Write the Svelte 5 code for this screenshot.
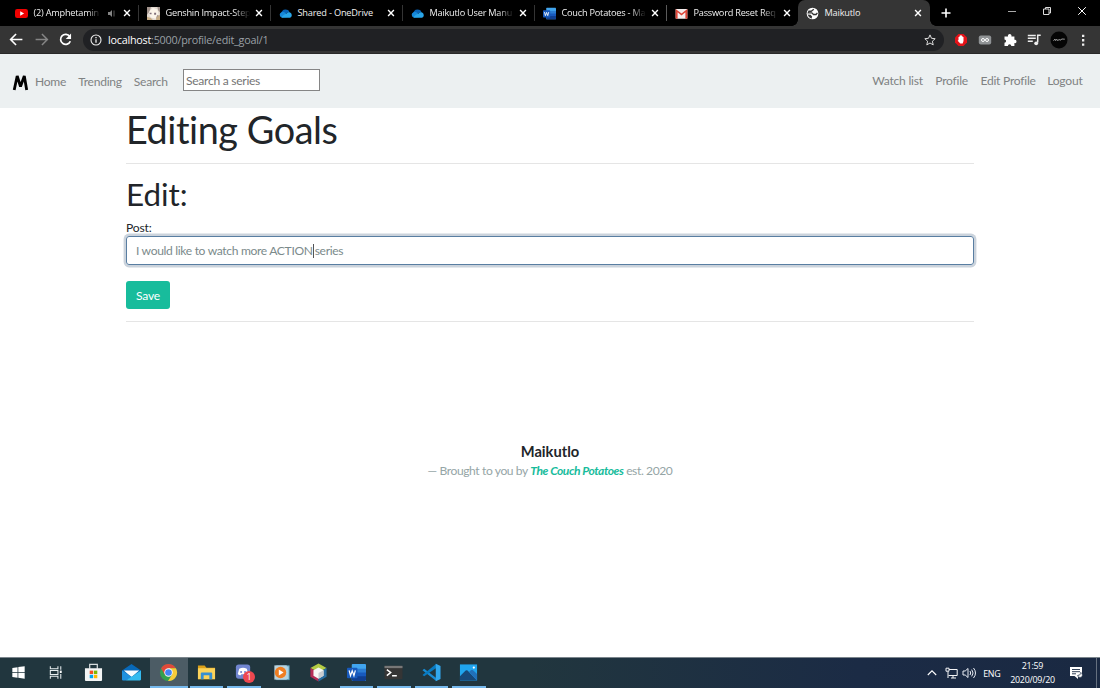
<script>
  const tabs = [
    { icon: 'youtube', title: '(2) Amphetamin', sound: true, fade: true, line: '#343434' },
    { icon: 'anime', title: 'Genshin Impact-Step', fade: true, line: '#343434' },
    { icon: 'cloud', title: 'Shared - OneDrive', line: '#343434' },
    { icon: 'cloud', title: 'Maikutlo User Manu', fade: true, line: '#343434' },
    { icon: 'word', title: 'Couch Potatoes - Ma', fade: true, line: '#5a5a5a' },
    { icon: 'gmail', title: 'Password Reset Req', fade: true, line: 'transparent' }
  ];
  const apps = [
    { icon: 'windows' },
    { icon: 'taskview' },
    { icon: 'store' },
    { icon: 'mail' },
    { icon: 'chrome', open: true, active: true },
    { icon: 'files', open: true },
    { icon: 'discord', open: true },
    { icon: 'media' },
    { icon: 'cube' },
    { icon: 'word', open: true },
    { icon: 'terminal', open: true },
    { icon: 'vscode', open: true },
    { icon: 'photos', open: true }
  ];
</script>

{#snippet close()}
  <svg class="x" viewBox="0 0 8 8"><path d="M1.1 1.1 6.9 6.9M6.9 1.1 1.1 6.9" stroke="#fff" stroke-width="1.4" /></svg>
{/snippet}

{#snippet glyph(name)}
  <svg class="glyph" viewBox="0 0 20 20">
    {#if name === 'youtube'}
      <rect x="0" y="3" width="20" height="14" rx="3.5" fill="#f00000" />
      <path d="m8 6.5 6 3.5-6 3.5z" fill="#fff" />
    {:else if name === 'anime'}
      <rect width="20" height="20" fill="#e2d8cf" />
      <path d="M0 0h6L4 7 0 12zM16 0h4v8l-3-3z" fill="#a3948d" />
      <path d="M4 6 9 1l7 3 2 8-5 6-7-2-3-5z" fill="#fbf4ea" />
      <path d="M4 9h3v2H4zM11 9h3v3h-3z" fill="#7f6d78" />
      <path d="M16 12l3 2-2 4-3-2z" fill="#a8978f" />
      <path d="M0 15l6 2 3 3H0zM14 17l6-5v8h-6z" fill="#c6ab84" />
    {:else if name === 'cloud'}
      <path d="M3 12C3 7 6 4 10 4c3 0 5 1 6 4z" fill="#0864b8" />
      <path d="M4 16a4.2 4.2 0 0 1 0-8c3-1 5 0 7 2l7 5z" fill="#1688da" />
      <path d="M4 16.5c1-4 5-5 7-6 2-2 4-3 6-2 3 1 4 7 0 8z" fill="#29a5e9" />
    {:else if name === 'word'}
      <rect x="5" y="1" width="15" height="18" rx="1" fill="#41a5ee" />
      <path d="M5 6h15v5H5z" fill="#2b7cd3" /><path d="M5 10h15v5H5z" fill="#185abd" /><path d="M5 14h15v4l-1 1H6l-1-1z" fill="#103f91" />
      <rect y="5" width="11" height="11" rx="1" fill="#185abd" />
      <path d="m2.2 7.8 1.5 5.5 1.8-5 1.8 5 1.5-5.5" fill="none" stroke="#fff" stroke-width="1.3" />
    {:else if name === 'gmail'}
      <rect x="1" y="3" width="18" height="15" rx="1" fill="#f4eeee" />
      <path d="M1 3 10 10 19 3v15h-3V8l-6 5-6-5v10H1z" fill="#dc4538" />
    {:else if name === 'globe'}
      <circle cx="10" cy="10" r="9" fill="#fff" />
      <path d="M12 3.500 8 6.500H4.500L3.500 9h5.500l2.500 2.500h4L17.500 9" fill="none" stroke="#353535" stroke-width="2" />
      <path d="M2.500 11.500 7 12l2.500 2.500-1 3.500-4-2.500z" fill="#353535" />
    {:else if name === 'windows'}
      <path d="M3.5 5.2 9 4.4v5.1H3.5zM9.8 4.3l6.7-1v6.2H9.8zM3.5 10.3H9v5.2l-5.5-.8zM9.8 10.3h6.7v6.3l-6.7-1z" fill="#fff" />
    {:else if name === 'taskview'}
      <path d="M3.5 3.5V6h8V3.5M3.5 16.5V14h8v2.5M3.5 8h8v4h-8zM14.5 3.5V7M14.5 11.5v5" fill="none" stroke="#e7eef0" stroke-width="1.1" />
      <path d="M13.5 8h2v2.5h-2z" fill="#fff" />
    {:else if name === 'store'}
      <path d="M6 6V1.5h8V6" fill="none" stroke="#d8dedf" stroke-width="1.3" />
      <path d="M1 5.5h18V18q0 1-1 1H2q-1 0-1-1z" fill="#f3f5f5" />
      <path d="M6 8h3.6v3.6H6z" fill="#f25022" /><path d="M10.4 8H14v3.6h-3.6z" fill="#7fba00" /><path d="M6 12.4h3.6V16H6z" fill="#00a4ef" /><path d="M10.4 12.4H14V16h-3.6z" fill="#ffb900" />
    {:else if name === 'mail'}
      <path d="m0 8 10-7 10 7v4H0z" fill="#0869b8" /><path d="M2 8h16l-8 7z" fill="#f7fbff" />
      <path d="m0 8 11 7-7 3.5H1L0 18z" fill="#1e91df" /><path d="m20 8-16 10.5h15l1-1z" fill="#35bbef" />
    {:else if name === 'chrome'}
      <circle cx="10" cy="10" r="9" fill="#32a14f" />
      <path d="M2.2 5.5a9 9 0 0 1 15.6 0H10l-3.9 6.8z" fill="#df493b" />
      <path d="M17.8 5.5A9 9 0 0 1 9.5 19l4.4-6.8L10 5.5z" fill="#f8cb3a" />
      <circle cx="10" cy="10" r="4.4" fill="#fff" /><circle cx="10" cy="10" r="3.5" fill="#4385f4" />
    {:else if name === 'files'}
      <path d="M1 2.5h7L10 5h9v12H1z" fill="#dba018" /><path d="M1 5.5h18V17H1z" fill="#fbd35a" />
      <path d="M4 17v-6q0-1 1-1h10q1 0 1 1v6h-3v-4H7v4z" fill="#358fd4" />
    {:else if name === 'discord'}
      <rect x="2" y="1.5" width="15" height="15" rx="3" fill="#7186d0" />
      <path d="M5.5 6q4-2 8 0l1.5 5.5q-1.500 1.5-3 1.5l-.8-1.2H7.8L7 13q-2 0-3-1.5z" fill="#fff" />
      <circle cx="7.5" cy="9.4" r="1.1" fill="#7186d0" /><circle cx="11.6" cy="9.4" r="1.1" fill="#7186d0" />
    {:else if name === 'media'}
      <rect x="5" y="3" width="13" height="14.5" fill="#a9d4e7" stroke="#5a9bb7" /><rect x="2.5" y="2.5" width="13" height="15" fill="#bcd3dc" />
      <circle cx="9" cy="10" r="6" fill="#ef7e22" /><path d="m7.2 6.800 5 3.200-5 3.200z" fill="#fff" />
    {:else if name === 'cube'}
      <path d="m10 .5 8.5 4.8L10 9.9 1.5 5.3z" fill="#b4cc45" /><path d="m1.5 5.3 8.5 4.6v9.6l-8.5-4.9z" fill="#b52e57" /><path d="M18.5 5.3 10 9.900v9.6l8.5-4.9z" fill="#286c9f" />
      <path d="m10 4.8 5.3 2.8v5.8L10 16.5l-5.3-3.1V7.6z" fill="#f7f8f5" /><path d="m10 10.5 5.3-2.9v5.8L10 16.5z" fill="#c9ccd0" />
    {:else if name === 'terminal'}
      <rect x=".5" y="3" width="19" height="14" rx="1" fill="#353535" /><path d="M.5 3h19v2.4H.5z" fill="#777" />
      <path d="m3 7 4 3-4 3.2M8.5 13.5h5" fill="none" stroke="#fff" stroke-width="1.6" />
    {:else if name === 'vscode'}
      <path d="M.5 7.5 2.3 6 15 15.7V19z" fill="#188bd3" />
      <path d="M.5 12.5 15 .8v4.5L2.3 14z" fill="#087ac0" /><path d="m14.5.8 5 2.3v13.8l-5 2.300z" fill="#32a8ed" />
    {:else if name === 'photos'}
      <rect x="1" y="1.5" width="18" height="17" fill="#20a5ee" /><path d="m1 14 6-6q1.5-1 3 1l9 9.5H1z" fill="#174879" />
      <path d="m10.5 9.5 2-2q1.2-1 2.3 0l4.2 4v7z" fill="#2170b9" /><circle cx="15.6" cy="4.8" r="1.2" fill="#fff" />
    {/if}
  </svg>
{/snippet}

<div class="screen">
  <header class="tabs">
    {#each tabs as tab}
      <div class="tab" class:sounding={tab.sound}>
        <span class="fav">{@render glyph(tab.icon)}</span>
        <span class="title" class:fade={tab.fade}>{tab.title}</span>
        {#if tab.sound}
          <svg class="sound" viewBox="0 0 9 9"><path d="M1 3h2l2-2v7L3 6H1z" fill="#858585" /><path d="M7 1.5v6" stroke="#555" /></svg>
        {/if}
        {@render close()}
        <span class="separator" style:background={tab.line}></span>
      </div>
    {/each}
    <div class="tab active">
      <span class="fav">{@render glyph('globe')}</span>
      <span class="title">Maikutlo</span>
      {@render close()}
    </div>
    <svg class="plus" viewBox="0 0 10 10"><path d="M5 .5v9M.5 5h9" stroke="#fff" stroke-width="1.6" /></svg>
    <div class="controls">
      <svg viewBox="0 0 10 10"><path d="M1 5.5h8" stroke="#aaa" /></svg>
      <svg viewBox="0 0 10 10"><path d="M1.5 3H7v5.5H1.5zM3.5 3V1.500h5V7H7" fill="none" stroke="#ddd" /></svg>
      <svg viewBox="0 0 10 10"><path d="m1.2 1.2 7.6 7.6M8.8 1.2 1.2 8.8" stroke="#fff" /></svg>
    </div>
  </header>

  <div class="toolbar">
    <div class="history">
      <svg viewBox="0 0 14 14"><path d="M12.5 7h-11M6.6 1.9 1.5 7l5.1 5.1" fill="none" stroke="#fff" stroke-width="1.5" /></svg>
      <svg viewBox="0 0 14 14"><path d="M1.5 7h11M7.4 1.9 12.5 7l-5.1 5.1" fill="none" stroke="#858585" stroke-width="1.4" /></svg>
      <svg viewBox="0 0 14 14"><path d="M11 4.2A4.7 4.7 0 1 0 11.5 8.6" fill="none" stroke="#fff" stroke-width="1.6" /><path d="M12.2 1.5v5h-5z" fill="#fff" /></svg>
    </div>
    <div class="address">
      <svg class="info" viewBox="0 0 12 12"><circle cx="6" cy="6" r="5" fill="none" stroke="#eee" stroke-width="1.1" /><path d="M6 5.2v3.6M6 3v1.2" stroke="#eee" stroke-width="1.3" /></svg>
      <span class="url"><b>localhost</b>:5000/profile/edit_goal/1</span>
      <svg class="star" viewBox="0 0 12 12"><path d="m6 .9 1.5 3.4 3.7.4-2.8 2.5.8 3.7L6 9l-3.2 1.9.8-3.7L.8 4.7l3.7-.4z" fill="none" stroke="#ddd" stroke-width="1" /></svg>
    </div>
    <div class="extensions">
      <svg viewBox="0 0 14 14"><path d="M4.5 1h5L13 4.5v5L9.5 13h-5L1 9.5v-5z" fill="#e31319" /><path d="M4.5 7V4h1V2.8h1V2h1v1h1v1h1v4l-.8 2.5H6.3L3.7 7.7l.7-.6 1 1" fill="#fff" /></svg>
      <svg viewBox="0 0 14 14"><rect x=".8" y="2.5" width="12.4" height="9" rx="2" fill="#909395" /><circle cx="5" cy="7" r="1.5" fill="none" stroke="#fff" /><circle cx="9" cy="7" r="1.5" fill="none" stroke="#fff" /></svg>
      <svg viewBox="0 0 14 14"><path d="M1.5 3.5H5a1.8 1.8 0 1 1 3.4 0h3v3.3a1.7 1.7 0 1 1 0 3.3v2.9H8.3a1.7 1.7 0 1 0-3.4 0H1.5V9.7a1.6 1.6 0 1 0 0-3.2z" fill="#fff" /></svg>
      <svg viewBox="0 0 14 14"><path d="M.8 2.4h8M.8 5.3h8M.8 8.2h5M13.7 2.3h-3v7.2" fill="none" stroke="#eee" stroke-width="1.5" /><circle cx="9.2" cy="10.3" r="1.9" fill="#eee" /></svg>
      <svg class="avatar" viewBox="0 0 18 18"><circle cx="9" cy="9" r="8.5" fill="#050505" /><path d="M3.5 9.8 5 8l.5 1.5L7 8.3l.5 1.2 2-1 .4.8L12 8l2.8.2" fill="none" stroke="#aaa" stroke-width=".9" /></svg>
      <svg viewBox="0 0 14 14"><path d="M6 1.7h2.3V4H6zm0 4.4h2.3v2.3H6zm0 4.4h2.3v2.3H6z" fill="#eee" /></svg>
    </div>
  </div>

  <nav>
    <svg class="logo" viewBox="0 0 17 17"><path d="M2.2 16 5.200 2l3.300 10.5L12.300 2 14.700 16" fill="none" stroke="#000" stroke-width="2.8" stroke-linejoin="bevel" /></svg>
    <div class="links">
      <span>Home</span>
      <span>Trending</span>
      <span>Search</span>
    </div>
    <div class="search-box">Search a series</div>
    <div class="account">
      <span>Watch list</span>
      <span>Profile</span>
      <span>Edit Profile</span>
      <span class="logout">Logout</span>
    </div>
  </nav>

  <main>
    <h1>Editing Goals</h1>
    <hr />
    <h2>Edit:</h2>
    <div class="label">Post:</div>
    <div class="field"><span>I would like to watch more ACTION</span><i class="caret"></i><span>series</span></div>
    <button>Save</button>
    <hr class="end" />
    <footer>
      <h3>Maikutlo</h3>
      <p>— Brought to you by <em>The Couch Potatoes</em> est. 2020</p>
    </footer>
  </main>

  <div class="taskbar">
    {#each apps as app}
      <div class="app" class:open={app.open} class:current={app.active}>
        {@render glyph(app.icon)}
        {#if app.icon === 'discord'}<span class="badge">1</span>{/if}
      </div>
    {/each}
    <div class="tray">
      <svg class="chevron" viewBox="0 0 10 10"><path d="m.8 7 4.2-4.2L9.2 7" fill="none" stroke="#fff" stroke-width="1.1" /></svg>
      <svg class="network" viewBox="0 0 13 13"><path d="M4 2.5h8.2v6H3.5M3 4.5V11M6 11h5M8 8.5V11M1 1.2h3v3H1z" fill="none" stroke="#f4f5f7" /></svg>
      <svg class="volume" viewBox="0 0 14 12"><path d="M1 4h2.2L6 1.5v9L3.2 8H1zM8 4q1.4 2 0 4M9.7 2.6q2.7 3.4 0 6.8M11.5 1q4 5 0 10" fill="none" stroke="#e9edf4" /></svg>
      <span class="language">ENG</span>
      <span class="clock"><span>21:59</span><span>2020/09/20</span></span>
      <svg class="notice" viewBox="0 0 14 14"><path d="M1 1h12v8H9v4L5.5 10H1z" fill="#fff" /><path d="M3 3.5h8M3 5.7h8M3 7.8h4" stroke="#1b2b45" stroke-width=".9" /><path d="M8.5 9.5a2.5 2.5 0 1 0 3-3q1 2.5-3 3z" fill="#fff" stroke="#1b2b45" stroke-width=".6" /></svg>
      <span class="peek"></span>
    </div>
  </div>
</div>

<style>
  :global(body) { margin: 0; overflow: hidden; }
  * { box-sizing: border-box; }
  svg { display: block; flex: none; }
  .screen { width: 1100px; height: 688px; display: flex; flex-direction: column; background: #fff; font-family: Lato, sans-serif; font-size: 12.08px; color: #212529; }
  .tabs { display: flex; height: 26px; flex: none; padding-left: 7px; background: #000; color: #f0f0f0; font-family: "Open Sans", sans-serif; font-size: 9.2px; }
  .tab { display: flex; align-items: center; width: 132px; flex: none; padding-left: 8px; }
  .fav { width: 13px; height: 13px; margin-right: 5px; flex: none; }
  .glyph { width: 100%; height: 100%; }
  .title { width: 86px; margin-right: 3.5px; flex: none; white-space: nowrap; letter-spacing: -.23px; line-height: 16px; padding-left: .5px; }
  .fade { mask-image: linear-gradient(90deg, #000 80%, transparent 99%); }
  .tab:not(.sounding) .title:not(.fade) { letter-spacing: -.18px; }
  .sounding .title { width: 68px; }
  .sound { width: 9px; height: 9px; margin: 0 7px 0 2px; }
  .x { width: 8px; height: 8px; }
  .separator { width: 1px; height: 16px; margin-left: auto; }
  .active { position: relative; background: #353535; border-radius: 7px 7px 0 0; margin-left: -1px; }
  .active::before, .active::after { content: ""; position: absolute; bottom: 0; width: 6px; height: 6px; }
  .active::before { left: -6px; background: radial-gradient(circle at 0 0, #000 5.5px, #353535 6px); }
  .active::after { right: -6px; background: radial-gradient(circle at 100% 0, #000 5.5px, #353535 6px); }
  .plus { width: 10px; height: 10px; margin: 8px 0 0 11px; }
  .controls { display: flex; gap: 25px; margin: 6px 13px 0 auto; }
  .controls svg { width: 10px; height: 10px; }
  .toolbar { height: 28px; flex: none; display: flex; align-items: center; background: #353535; padding: 0 6px 0 9px; border-bottom: 1px solid #292929; }
  .history { display: flex; gap: 9.5px; width: 74px; }
  .history svg { width: 15px; height: 15px; }
  .address { height: 22px; width: 861px; flex: none; border-radius: 11px; background: #202124; display: flex; align-items: center; padding: 0 8px 0 7px; color: #9aa0a6; }
  .info { width: 12px; height: 12px; margin-right: 6px; }
  .url { font: 10.8px/18px "Open Sans", sans-serif; letter-spacing: -.24px; }
  .url b { font-weight: 400; color: #fff; }
  .star { width: 12px; height: 12px; margin-left: auto; }
  .extensions { display: flex; align-items: center; gap: 10.4px; margin-left: 10px; }
  .extensions svg { width: 14px; height: 14px; }
  .extensions .avatar { width: 18px; height: 18px; margin: 0 -2px; }
  nav { height: 54px; flex: none; background: #ecf0f1; display: flex; align-items: center; padding: 0 17.5px 0 12px; color: #7f8283; white-space: nowrap; }
  .logo { width: 17px; height: 17px; margin-top: 2px; }
  .links { display: flex; gap: 12px; margin-left: 6px; width: 148px; letter-spacing: -.26px; }
  .search-box { width: 137px; height: 22px; background: #fff; border: 1px solid #858585; color: #757575; line-height: 21px; padding-left: 2px; margin-bottom: 3px; letter-spacing: -.28px; }
  .account { display: flex; gap: 12.5px; margin-left: auto; letter-spacing: -.24px; margin-bottom: 2px; }
  .logout { margin-left: -1px; }
  main { width: 848px; margin: 0 auto; flex: 1; min-height: 0; }
  h1, h2, h3, p { margin: 0; font-weight: 400; }
  h1 { height: 55px; font-size: 37.8px; line-height: 43px; letter-spacing: -.44px; }
  hr { border: 0; border-top: 1px solid #e5e5e5; margin: 0; }
  h2 { font-size: 31.4px; line-height: 38px; margin-top: 11px; }
  .label { height: 18px; margin-top: 6px; line-height: 18px; letter-spacing: -.16px; }
  .field { height: 29px; border: 1px solid #597ea2; border-radius: 3px; box-shadow: 0 0 0 2.4px #cbd3dc; display: flex; align-items: center; padding-left: 9px; color: #7b8a8b; margin-top: -1px; letter-spacing: -.33px; }
  .caret { width: 1px; height: 14px; background: #555; margin-right: 1px; }
  button { display: block; width: 44px; height: 28px; margin-top: 16px; border: 0; border-radius: 3px; padding: 0; background: #18bc9c; color: #fff; font: inherit; letter-spacing: -.15px; }
  .end { margin-top: 12px; }
  footer { margin-top: 119px; text-align: center; }
  h3 { font-size: 14.7px; line-height: 21px; font-weight: 700; }
  p { line-height: 18px; color: #95a5a6; letter-spacing: -.4px; }
  em { color: #18bc9c; font-weight: 700; letter-spacing: -.46px; }
  .taskbar { height: 31px; flex: none; border-top: 1px solid #7b858c; background: linear-gradient(90deg, #21363e 0%, #21363e 48%, #1b2b45 78%, #1a2942); display: flex; color: #fff; font-family: "Open Sans", sans-serif; }
  .app { width: 37.5px; flex: none; display: flex; align-items: center; justify-content: center; position: relative; border-bottom: 2px solid transparent; background-clip: padding-box; }
  .app .glyph { width: 19px; height: 19px; margin-top: 1px; margin-right: .5px; }
  .open { border-image: linear-gradient(90deg, transparent 9%, #76b9ed 9% 91%, transparent 91%) 2; border-width: 0 0 2px; border-style: solid; }
  .current { background: #4c5c65; border-image: none; border-color: #76b9ed; }
  .badge { position: absolute; left: 18px; top: 13px; width: 12px; height: 12px; border-radius: 50%; background: #ef4850; font-size: 9px; line-height: 12px; text-align: center; }
  .tray { display: flex; align-items: center; margin-left: auto; font-size: 8.9px; letter-spacing: -.25px; }
  .chevron { width: 10px; height: 10px; }
  .network { width: 13px; height: 13px; margin-left: 8px; }
  .volume { width: 14px; height: 12px; margin-left: 4px; }
  .language { margin-left: 7px; }
  .clock { display: flex; flex-direction: column; text-align: center; line-height: 13.5px; width: 46px; margin-left: 9px; margin-top: -1px; }
  .notice { width: 14px; height: 14px; margin-left: 13px; }
  .peek { width: 1px; height: 30px; background: #65707f; margin: 0 3px 0 13.5px; }
</style>
